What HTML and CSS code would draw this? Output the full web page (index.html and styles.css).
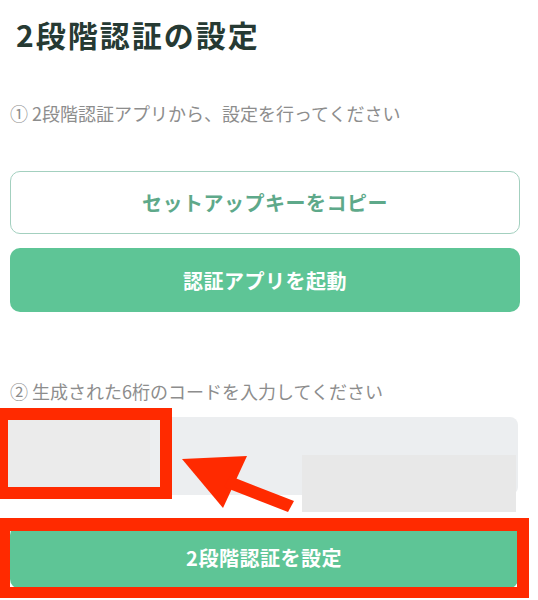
FILE: index.html
```html
<!DOCTYPE html>
<html lang="ja">
<head>
    <meta charset="UTF-8">
    <meta name="viewport" content="width=device-width, initial-scale=1.0">
    <title>2段階認証の設定</title>
    <link rel="stylesheet" href="styles.css">
</head>
<body>
    <div class="page">
        <h1 class="title">2段階認証の設定</h1>

        <!-- Step 1 -->
        <p class="step step-first">① 2段階認証アプリから、設定を行ってください</p>
        <div class="actions">
            <button class="btn btn-outline">セットアップキーをコピー</button>
            <button class="btn btn-fill">認証アプリを起動</button>
        </div>

        <!-- Step 2 -->
        <p class="step step-second">② 生成された6桁のコードを入力してください</p>
        <div class="code-field">
            <input type="text" class="code-input" inputmode="numeric" maxlength="6">
        </div>
        <button class="btn btn-fill btn-submit">2段階認証を設定</button>
    </div>

    <!-- annotations over the screenshot -->
    <div class="mask mask-code"></div>
    <div class="mask mask-side"></div>
    <div class="mark mark-code"></div>
    <div class="mark mark-submit"></div>
    <svg class="arrow" width="130" height="70" viewBox="0 0 130 70">
        <polygon points="2,9 67,6 43,58" fill="#ff2a00"/>
        <polygon points="50,26 114,51 108,62 44,37" fill="#ff2a00"/>
    </svg>
</body>
</html>
```

FILE: styles.css
```css
body {
    margin: 0;
    font-family: "Noto Sans CJK JP", "Noto Sans", sans-serif;
    background-color: #fff;
}

.page {
    padding: 0 10px;
}

.title {
    margin: 0;
    padding: 13px 0 0 6px;
    font-size: 30px;
    line-height: 42px;
    letter-spacing: 2px;
    font-weight: bold;
    color: #263a33;
}

.step {
    margin: 0;
    font-size: 18px;
    line-height: 26px;
    color: #8d8d8d;
}

.step-first {
    margin-top: 45px;
}

.step-second {
    margin-top: 66px;
}

.actions {
    display: flex;
    flex-direction: column;
    gap: 14px;
    margin-top: 45px;
}

.btn {
    display: block;
    width: 510px;
    height: 63px;
    border-radius: 10px;
    font-family: inherit;
    font-size: 20px;
    font-weight: bold;
    letter-spacing: 0.5px;
    cursor: pointer;
}

.btn-outline {
    background: #fff;
    border: 1.5px solid #a3d0bf;
    color: #5ea98a;
}

.btn-fill {
    height: 64px;
    background: #5ec596;
    border: none;
    color: #fff;
}

.code-field {
    margin-top: 13px;
}

.code-input {
    box-sizing: border-box;
    width: 508px;
    height: 78px;
    border: none;
    border-radius: 8px;
    background: #eceef0;
}

.btn-submit {
    width: 508px;
    height: 64px;
    margin-top: 30px;
}

.mask {
    position: absolute;
}

.mask-code {
    left: 0;
    top: 417px;
    width: 150px;
    height: 75px;
    background: #ebebeb;
}

.mask-side {
    left: 302px;
    top: 455px;
    width: 214px;
    height: 57px;
    background: #e8e8e8;
}

.mark {
    position: absolute;
    border: 12px solid #ff2a00;
}

.mark-code {
    left: -4px;
    top: 408px;
    width: 152px;
    height: 67px;
}

.mark-submit {
    left: -2px;
    top: 518px;
    width: 507px;
    height: 56px;
    border-width: 13px 12px 11px 12px;
}

.arrow {
    position: absolute;
    left: 180px;
    top: 450px;
}
```
